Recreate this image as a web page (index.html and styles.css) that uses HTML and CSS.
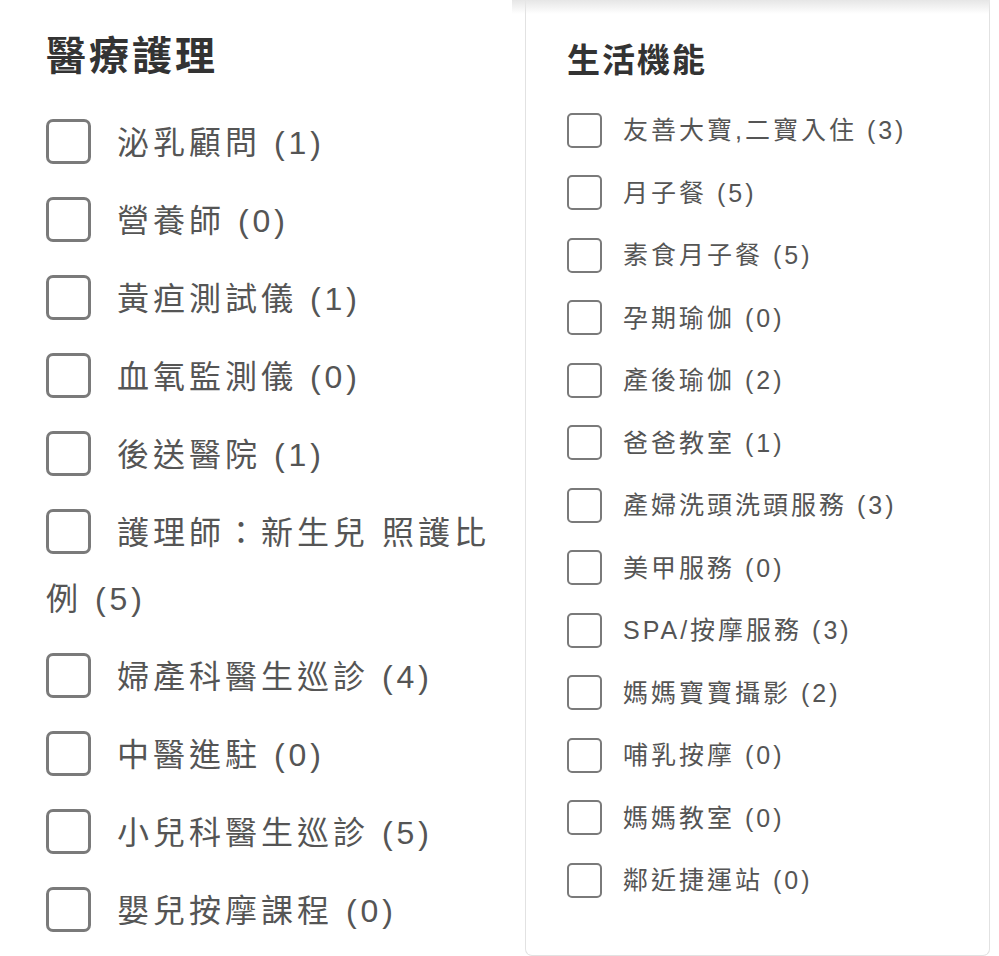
FILE: index.html
```html
<!DOCTYPE html>
<html lang="zh-Hant">
<head>
<meta charset="utf-8">
<title>篩選</title>
<link rel="stylesheet" href="styles.css">
</head>
<body>
<div class="page">
  <section class="col-left">
    <h2 class="title-lg">醫療護理</h2>
    <ul class="list-lg">
      <li><span class="box-lg"></span>泌乳顧問 (1)</li>
      <li><span class="box-lg"></span>營養師 (0)</li>
      <li><span class="box-lg"></span>黃疸測試儀 (1)</li>
      <li><span class="box-lg"></span>血氧監測儀 (0)</li>
      <li><span class="box-lg"></span>後送醫院 (1)</li>
      <li><span class="box-lg"></span>護理師：新生兒 照護比例 (5)</li>
      <li><span class="box-lg"></span>婦產科醫生巡診 (4)</li>
      <li><span class="box-lg"></span>中醫進駐 (0)</li>
      <li><span class="box-lg"></span>小兒科醫生巡診 (5)</li>
      <li><span class="box-lg"></span>嬰兒按摩課程 (0)</li>
    </ul>
  </section>
  <section class="col-right">
    <div class="card">
      <h2 class="title-sm">生活機能</h2>
      <ul class="list-sm">
        <li><span class="box-sm"></span>友善大寶,二寶入住 (3)</li>
        <li><span class="box-sm"></span>月子餐 (5)</li>
        <li><span class="box-sm"></span>素食月子餐 (5)</li>
        <li><span class="box-sm"></span>孕期瑜伽 (0)</li>
        <li><span class="box-sm"></span>產後瑜伽 (2)</li>
        <li><span class="box-sm"></span>爸爸教室 (1)</li>
        <li><span class="box-sm"></span>產婦洗頭洗頭服務 (3)</li>
        <li><span class="box-sm"></span>美甲服務 (0)</li>
        <li><span class="box-sm"></span>SPA/按摩服務 (3)</li>
        <li><span class="box-sm"></span>媽媽寶寶攝影 (2)</li>
        <li><span class="box-sm"></span>哺乳按摩 (0)</li>
        <li><span class="box-sm"></span>媽媽教室 (0)</li>
        <li><span class="box-sm"></span>鄰近捷運站 (0)</li>
      </ul>
    </div>
  </section>
</div>
</body>
</html>
```

FILE: styles.css
```css
* { box-sizing: border-box; }

html, body {
  margin: 0;
  padding: 0;
  background: #ffffff;
}

body {
  font-family: "Liberation Sans", "Noto Sans CJK TC", sans-serif;
  color: #555555;
  width: 999px;
  height: 956px;
  overflow: hidden;
}

.page {
  display: flex;
  align-items: flex-start;
}

ul {
  list-style: none;
  margin: 0;
  padding: 0;
}

h2 { margin: 0; }

/* left column */
.col-left {
  width: 512px;
  padding: 28px 10px 0 46px;
  flex: none;
}

.title-lg {
  font-size: 40px;
  line-height: 56px;
  font-weight: 700;
  letter-spacing: 3px;
  color: #333333;
  margin-bottom: 26px;
}

.list-lg li {
  font-size: 32px;
  line-height: 66px;
  letter-spacing: 4px;
  margin-bottom: 12px;
}

.box-lg {
  display: inline-block;
  width: 45px;
  height: 45px;
  border: 3px solid #7a7a7a;
  border-radius: 7px;
  margin-right: 26px;
  vertical-align: -10px;
}

/* right column */
.col-right {
  position: relative;
  width: 487px;
  flex: none;
}

.col-right::before {
  content: "";
  position: absolute;
  left: 0;
  right: 9px;
  top: 0;
  height: 14px;
  background: linear-gradient(#e6e6e6, rgba(255, 255, 255, 0));
}

.card {
  margin-left: 13px;
  width: 465px;
  height: 956px;
  border: 1px solid #e2e2e2;
  border-top: 0;
  border-radius: 0 0 7px 7px;
  padding: 36px 20px 0 41px;
}

.title-sm {
  font-size: 33px;
  line-height: 50px;
  font-weight: 700;
  letter-spacing: 2px;
  color: #333333;
  margin-bottom: 19px;
}

.list-sm li {
  font-size: 25px;
  line-height: 50px;
  letter-spacing: 3px;
  margin-bottom: 12.5px;
  white-space: nowrap;
}

.box-sm {
  display: inline-block;
  width: 35px;
  height: 35px;
  border: 2px solid #7a7a7a;
  border-radius: 5px;
  margin-right: 21px;
  vertical-align: -8.5px;
}
```
